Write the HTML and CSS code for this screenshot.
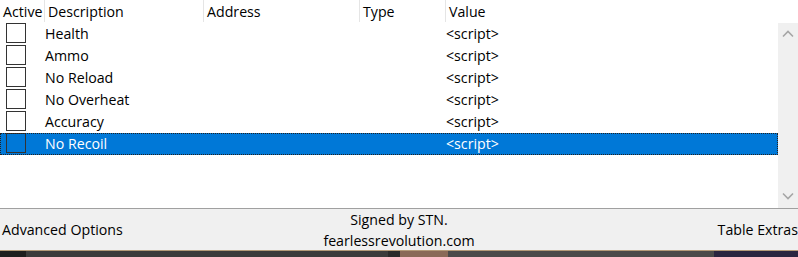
FILE: index.html
```html
<!DOCTYPE html>
<html lang="en">
  <head>
    <title>Cheat Table</title>
    <link rel="stylesheet" href="styles.css">
  </head>
  <body>
    <div class="window">
      <div class="head">
        <div class="col">Active</div>
        <div class="col">Description</div>
        <div class="col">Address</div>
        <div class="col">Type</div>
        <div class="col last">Value</div>
      </div>
      <div class="list">
        <div class="rows">
          <div class="row">
            <div class="cell"><span class="check"></span></div>
            <div class="cell">Health</div>
            <div class="cell"></div>
            <div class="cell"></div>
            <div class="cell">&lt;script&gt;</div>
          </div>
          <div class="row">
            <div class="cell"><span class="check"></span></div>
            <div class="cell">Ammo</div>
            <div class="cell"></div>
            <div class="cell"></div>
            <div class="cell">&lt;script&gt;</div>
          </div>
          <div class="row">
            <div class="cell"><span class="check"></span></div>
            <div class="cell">No Reload</div>
            <div class="cell"></div>
            <div class="cell"></div>
            <div class="cell">&lt;script&gt;</div>
          </div>
          <div class="row">
            <div class="cell"><span class="check"></span></div>
            <div class="cell">No Overheat</div>
            <div class="cell"></div>
            <div class="cell"></div>
            <div class="cell">&lt;script&gt;</div>
          </div>
          <div class="row">
            <div class="cell"><span class="check"></span></div>
            <div class="cell">Accuracy</div>
            <div class="cell"></div>
            <div class="cell"></div>
            <div class="cell">&lt;script&gt;</div>
          </div>
          <div class="row selected">
            <div class="cell"><span class="check"></span></div>
            <div class="cell">No Recoil</div>
            <div class="cell"></div>
            <div class="cell"></div>
            <div class="cell">&lt;script&gt;</div>
          </div>
        </div>
        <div class="scrollbar">
          <svg width="20" height="20" viewBox="0 0 20 20"><path d="M5 12.5 L10 7.5 L15 12.5" fill="none" stroke="#a6a6a6" stroke-width="1.6"/></svg>
          <svg width="20" height="20" viewBox="0 0 20 20"><path d="M5 7.5 L10 12.5 L15 7.5" fill="none" stroke="#a6a6a6" stroke-width="1.6"/></svg>
        </div>
      </div>
      <div class="footer">
        <div class="side">Advanced Options</div>
        <div class="sign">
          <div>Signed by STN.</div>
          <div>fearlessrevolution.com</div>
        </div>
        <div class="side right">Table Extras</div>
      </div>
      <div class="taskbar">
        <div class="tb-a"></div>
        <div class="tb-b"></div>
        <div class="tb-c"></div>
        <div class="tb-d"></div>
        <div class="tb-e"></div>
        <div class="tb-f"></div>
      </div>
    </div>
  </body>
</html>
```

FILE: styles.css
```css
* {
  margin: 0;
  box-sizing: border-box;
}
body {
  font-family: "Open Sans", "Noto Sans", sans-serif;
  font-size: 14.2px;
  color: #000;
  background: #fff;
}
.window {
  width: 798px;
  height: 257px;
  overflow: hidden;
}
.head,
.row {
  display: grid;
  grid-template-columns: 45px 159px 156px 86px 1fr;
}
.head {
  height: 23px;
  line-height: 24px;
}
.col {
  padding-left: 3px;
  border-right: 1px solid #e5e5e5;
  height: 22px;
  white-space: nowrap;
}
.col.last {
  border-right: none;
}
.list {
  display: flex;
  height: 185px;
}
.rows {
  flex: 1;
}
.row {
  height: 22px;
  line-height: 21px;
}
.cell {
  white-space: nowrap;
}
.check {
  display: block;
  width: 20px;
  height: 20px;
  margin: 0 0 0 6px;
  border: 1px solid #333;
  background: #fff;
}
.selected {
  background: #0078d7;
  color: #fff;
  outline: 1px dotted #222;
  outline-offset: -1px;
}
.selected .check {
  background: #0078d7;
}
.scrollbar {
  width: 20px;
  background: #f0f0f0;
  display: flex;
  flex-direction: column;
  justify-content: space-between;
  padding: 1px 0 2px;
}
.footer {
  height: 42px;
  background: #f0f0f0;
  border-top: 1px solid #a0a0a0;
  display: flex;
  justify-content: space-between;
  align-items: center;
  line-height: 21px;
}
.side {
  width: 200px;
  padding-left: 2px;
}
.side.right {
  text-align: right;
  padding-right: 0;
}
.sign {
  text-align: center;
  padding-top: 1px;
}
.taskbar {
  height: 7px;
  display: flex;
  border-top: 1px solid #b39a78;
}
.tb-a {
  width: 26px;
  background: #1e1e1e;
}
.tb-b {
  width: 362px;
  background: #3b3b3b;
}
.tb-c {
  width: 12px;
  background: #2a2a2a;
}
.tb-d {
  width: 48px;
  background: #8a6a58;
}
.tb-e {
  width: 266px;
  background: #4a4a4a;
}
.tb-f {
  flex: 1;
  background: #2a2540;
}
```
